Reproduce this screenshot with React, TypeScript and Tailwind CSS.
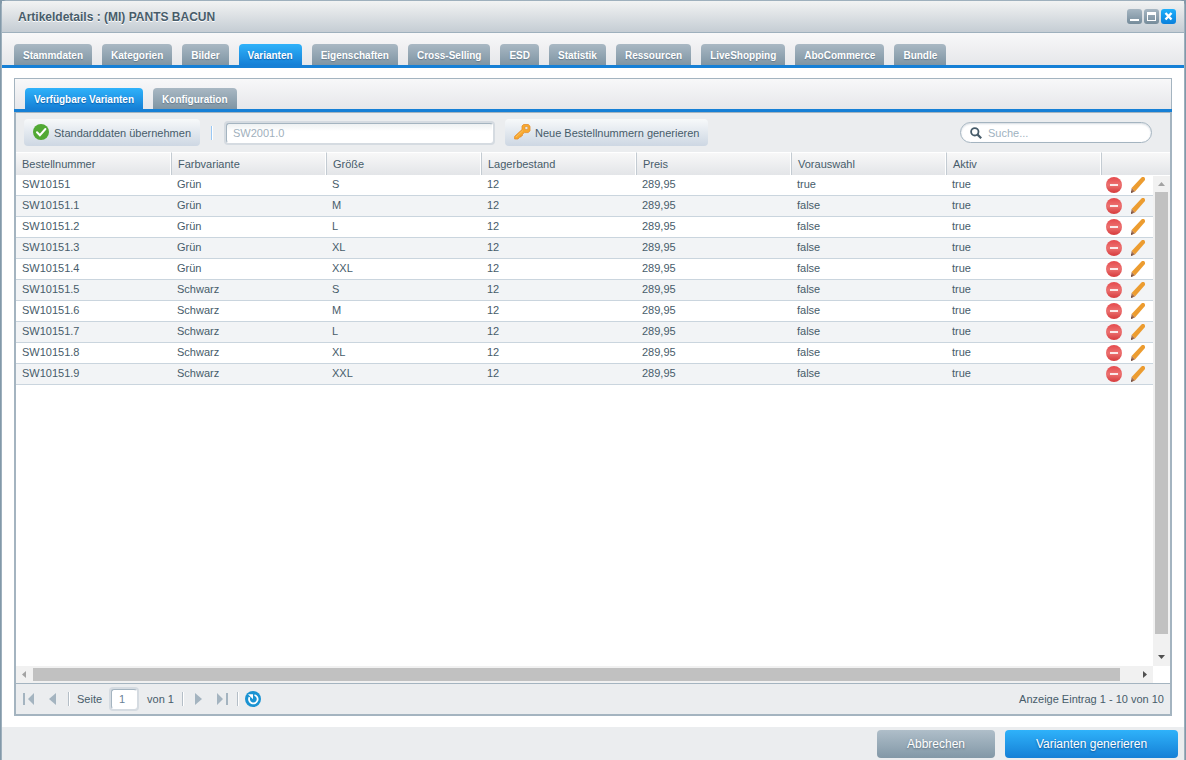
import type {ReactNode} from 'react'

const tabs = [
  'Stammdaten',
  'Kategorien',
  'Bilder',
  'Varianten',
  'Eigenschaften',
  'Cross-Selling',
  'ESD',
  'Statistik',
  'Ressourcen',
  'LiveShopping',
  'AboCommerce',
  'Bundle',
]

const columns = ['Bestellnummer', 'Farbvariante', 'Größe', 'Lagerbestand', 'Preis', 'Vorauswahl', 'Aktiv']

const sizes = ['S', 'M', 'L', 'XL', 'XXL']

const variants = ['Grün', 'Schwarz'].flatMap((color, c) =>
  sizes.map((size, s) => {
    const index = c * sizes.length + s
    return {
      number: index === 0 ? 'SW10151' : `SW10151.${index}`,
      color,
      size,
      stock: '12',
      price: '289,95',
      preselected: index === 0 ? 'true' : 'false',
      active: 'true',
    }
  }),
)

function Tab({label, active}: {label: string; active?: boolean}) {
  return (
    <button
      type="button"
      role="tab"
      aria-selected={!!active}
      className={`h-[21px] whitespace-nowrap rounded-t px-[9px] text-[10px] font-bold leading-[23px] text-white ${
        active
          ? 'bg-linear-to-b from-[#2fb2fa] to-[#1680d6] [text-shadow:0_1px_1px_#0a5fae]'
          : 'bg-linear-to-b from-[#a9b8c3] to-[#7f95a4] [text-shadow:0_1px_1px_#64798a]'
      }`}
    >
      {label}
    </button>
  )
}

function ToolButton({icon, children}: {icon: ReactNode; children: ReactNode}) {
  return (
    <button
      type="button"
      className="flex h-[27px] items-center gap-1 whitespace-nowrap rounded bg-linear-to-b from-[#f7f9fa] to-[#cdd7e3] px-[9px]"
    >
      {icon}
      <span className="pt-px">{children}</span>
    </button>
  )
}

function Separator() {
  return <span className="h-[14px] w-[2px] border-l border-[#b4bec7] bg-white" />
}

function CheckIcon() {
  return (
    <svg width="17" height="17" viewBox="0 0 17 17" aria-hidden="true">
      <circle cx="8" cy="8" r="8" fill="#51a934" />
      <path d="M4 8.2l2.900 3L12.400 5" fill="none" stroke="#fff" strokeWidth="2" strokeLinecap="round" />
    </svg>
  )
}

function KeyIcon() {
  return (
    <svg width="17" height="17" viewBox="0 0 17 17" aria-hidden="true">
      <path
        d="M9.500.5h4.800l1.700 1.700v4.600l-1.700 1.800h-4L8.500 10.300v1.200H7.200v1.400H5.800L4 15H.6v-2.600L8 5.600V2z"
        fill="#f8a92f"
        stroke="#e58d2c"
        strokeWidth=".8"
      />
      <path d="M11 2.600h2.800v2.800H11z" fill="#ebedef" stroke="#d98a33" strokeWidth=".6" />
      <path d="M2 13l7-6.500" stroke="#fbbf5c" />
    </svg>
  )
}

function DeleteIcon() {
  return (
    <svg width="16" height="16" viewBox="0 0 16 16" aria-hidden="true">
      <defs>
        <linearGradient id="delete-fill" x1="0" y1="0" x2="0" y2="1">
          <stop offset="0" stopColor="#e5494c" />
          <stop offset=".5" stopColor="#ec7271" />
          <stop offset="1" stopColor="#d63a3c" />
        </linearGradient>
      </defs>
      <circle cx="8" cy="8" r="8" fill="url(#delete-fill)" />
      <path d="M4 8h8" stroke="#fbe9e9" strokeWidth="2" />
    </svg>
  )
}

function PencilIcon() {
  return (
    <svg width="16" height="16" viewBox="0 0 16 16" aria-hidden="true">
      <path d="M1.600 11L11 .9 12 0h2l1 1.200v1.800L5 14.400z" fill="#ec9c30" />
      <path d="M1.600 11L5 14.400 1 16z" fill="#a9704e" />
      <path d="M1.200 13.400L3.200 15.100 1 16z" fill="#6e5148" />
    </svg>
  )
}

function TitleBar() {
  return (
    <header className="flex h-8 items-center justify-between border-b border-[#9eb0bd] bg-linear-to-b from-[#f2f3f3] to-[#c5cdd4] pl-4 pr-2">
      <h1 className="text-xs font-bold text-[#475c6a] [text-shadow:0_1px_0_#fff]">
        Artikeldetails : (MI) PANTS BACUN
      </h1>
      <div className="flex gap-[2px]">
        <button
          type="button"
          aria-label="Minimieren"
          className="size-[15px] rounded-[3px] bg-linear-to-b from-[#a6b6c2] to-[#768c9b]"
        >
          <svg width="15" height="15" viewBox="0 0 15 15" aria-hidden="true">
            <path d="M3 11h9" stroke="#fff" strokeWidth="2" />
          </svg>
        </button>
        <button
          type="button"
          aria-label="Maximieren"
          className="size-[15px] rounded-[3px] bg-linear-to-b from-[#a6b6c2] to-[#768c9b]"
        >
          <svg width="15" height="15" viewBox="0 0 15 15" aria-hidden="true">
            <path d="M3 3h9v9H3zM4 6v5h7V6z" fill="#fff" fillRule="evenodd" />
          </svg>
        </button>
        <button
          type="button"
          aria-label="Schließen"
          className="size-[15px] rounded-[3px] bg-linear-to-b from-[#1fb0fb] to-[#0a80dc]"
        >
          <svg width="15" height="15" viewBox="0 0 15 15" aria-hidden="true">
            <path d="M4.500 4l6 6.500m0-6.500l-6 6.500" stroke="#fff" strokeWidth="2.400" />
          </svg>
        </button>
      </div>
    </header>
  )
}

function Toolbar() {
  return (
    <div className="flex h-10 items-center border-t border-[#a4b4c0] pl-2 pr-[18px]">
      <ToolButton icon={<CheckIcon />}>Standarddaten übernehmen</ToolButton>
      <span className="ml-[11px] h-[14px] w-[2px] border-l border-[#99c8f5] bg-white" />
      <div className="ml-[11px] rounded bg-[#d5dbe1] p-[2px]">
        <input
          type="text"
          aria-label="Bestellnummer Vorlage"
          defaultValue="SW2001.0"
          className="block h-5 w-[267px] rounded-[3px] border border-[#a4b4c0] border-b-white border-r-white bg-white bg-linear-to-b from-[#eef1f2] to-white to-40% px-[6px] text-[#9fb0bc]"
        />
      </div>
      <div className="ml-[10px]">
        <ToolButton icon={<KeyIcon />}>Neue Bestellnummern generieren</ToolButton>
      </div>
      <label className="ml-auto flex h-[21px] w-48 items-center gap-[6px] rounded-full border border-[#a4b4c0] bg-white px-[9px] shadow-[inset_0_1px_2px_#d5dbe1]">
        <svg width="12" height="12" viewBox="0 0 12 12" aria-hidden="true" className="shrink-0">
          <circle cx="4.800" cy="4.800" r="3.700" fill="none" stroke="#475c6a" strokeWidth="1.800" />
          <path d="M7.600 7.600l3.600 3.600" stroke="#475c6a" strokeWidth="2.200" />
        </svg>
        <input
          type="search"
          aria-label="Suche"
          placeholder="Suche..."
          className="min-w-0 flex-1 bg-transparent pt-px outline-none placeholder:text-[#a0b2c0]"
        />
      </label>
    </div>
  )
}

function VerticalScrollbar() {
  return (
    <div className="absolute bottom-[17px] right-0 top-6 flex w-[17px] flex-col items-center bg-[#f1f1f1]">
      <svg width="17" height="16" viewBox="0 0 17 16" aria-hidden="true">
        <path d="M5 10h7L8.500 6z" fill="#a3a3a3" />
      </svg>
      <div className="w-[13px] flex-1 bg-[#c1c1c1]" />
      <svg width="17" height="32" viewBox="0 0 17 32" aria-hidden="true">
        <path d="M5 21h7l-3.500 4z" fill="#505050" />
      </svg>
    </div>
  )
}

function HorizontalScrollbar() {
  return (
    <div className="mr-[17px] flex h-[17px] items-center bg-[#f1f1f1]">
      <svg width="17" height="17" viewBox="0 0 17 17" aria-hidden="true">
        <path d="M10 5v7L6 8.500z" fill="#a3a3a3" />
      </svg>
      <div className="h-[13px] flex-1 bg-[#c1c1c1]" />
      <svg width="33" height="17" viewBox="0 0 33 17" aria-hidden="true">
        <path d="M23 5v7l4-3.500z" fill="#505050" />
      </svg>
    </div>
  )
}

function VariantGrid() {
  return (
    <div className="relative flex flex-1 flex-col justify-between bg-white">
      <table className="w-full table-fixed border-separate border-spacing-0 text-left">
        <thead>
          <tr className="h-[23px] bg-linear-to-b from-[#f9f9f9] to-[#e3e5e8]">
            {columns.map(column => (
              <th
                key={column}
                scope="col"
                className="border-l border-t border-l-[#c3cbd2] border-t-white px-[6px] font-normal shadow-[inset_-1px_0_0_#fff] first:border-l-0"
              >
                {column}
              </th>
            ))}
            <td className="w-[69px] border-l border-t border-l-[#c3cbd2] border-t-white" />
          </tr>
        </thead>
        <tbody>
          {variants.map(variant => (
            <tr
              key={variant.number}
              className="h-[21px] even:bg-[#f2f4f6] *:border-b *:border-[#cad5de] *:pb-[2px] *:pl-[6px] *:last:pl-[5px]"
            >
              <td>{variant.number}</td>
              <td>{variant.color}</td>
              <td>{variant.size}</td>
              <td>{variant.stock}</td>
              <td>{variant.price}</td>
              <td>{variant.preselected}</td>
              <td>{variant.active}</td>
              <td>
                <div className="-mb-[2px] flex gap-2">
                  <button type="button" aria-label="Löschen">
                    <DeleteIcon />
                  </button>
                  <button type="button" aria-label="Bearbeiten">
                    <PencilIcon />
                  </button>
                </div>
              </td>
            </tr>
          ))}
        </tbody>
      </table>
      <VerticalScrollbar />
      <HorizontalScrollbar />
    </div>
  )
}

function Paging() {
  return (
    <div className="flex h-[31px] items-center border-t border-[#a4b4c0] pl-[7px] pr-[6px]">
      <button type="button" aria-label="Erste Seite">
        <svg width="12" height="12" viewBox="0 0 12 12" aria-hidden="true">
          <path d="M0 0h2v12H0zM11 0v12L5 6z" fill="#a4b4c0" />
        </svg>
      </button>
      <button type="button" aria-label="Vorherige Seite" className="ml-[14px]">
        <svg width="7" height="12" viewBox="0 0 7 12" aria-hidden="true">
          <path d="M7 0v12L0 6z" fill="#a4b4c0" />
        </svg>
      </button>
      <span className="ml-3 flex">
        <Separator />
      </span>
      <label htmlFor="page" className="ml-[7px]">
        Seite
      </label>
      <div className="ml-[7px] rounded bg-[#d5dbe1] p-[2px]">
        <input
          id="page"
          type="text"
          defaultValue="1"
          className="block h-5 w-[26px] rounded-[3px] border border-[#a4b4c0] border-b-white border-r-white bg-white px-[7px] text-[#6a8296]"
        />
      </div>
      <span className="ml-2">von 1</span>
      <span className="ml-2 flex">
        <Separator />
      </span>
      <button type="button" aria-label="Nächste Seite" className="ml-[11px]">
        <svg width="7" height="12" viewBox="0 0 7 12" aria-hidden="true">
          <path d="M0 0v12l7-6z" fill="#a4b4c0" />
        </svg>
      </button>
      <button type="button" aria-label="Letzte Seite" className="ml-[14px]">
        <svg width="12" height="12" viewBox="0 0 12 12" aria-hidden="true">
          <path d="M10 0h2v12h-2zM1 0v12l6-6z" fill="#a4b4c0" />
        </svg>
      </button>
      <span className="ml-[9px] flex">
        <Separator />
      </span>
      <button type="button" aria-label="Aktualisieren" className="ml-[6px]">
        <svg width="16" height="16" viewBox="0 0 16 16" aria-hidden="true">
          <circle cx="8" cy="8" r="8" fill="#1a93d2" />
          <path d="M9.500 4a4.300 4.300 0 1 1-5 2.200" fill="none" stroke="#fff" strokeWidth="1.800" />
          <path d="M3 3.200h5v5z" fill="#fff" />
        </svg>
      </button>
      <span className="ml-auto">Anzeige Eintrag 1 - 10 von 10</span>
    </div>
  )
}

export default function App() {
  return (
    <div className="flex min-h-screen flex-col bg-[#8299a9] px-px font-['Liberation_Sans',Arial,sans-serif] text-[11px] leading-[14px] text-[#475c6a]">
      <div className="flex flex-1 flex-col rounded-t-md border border-b-0 border-[#9eb0bd] bg-[#ebedef]">
        <TitleBar />
        <nav
          role="tablist"
          aria-label="Artikel"
          className="flex gap-[10px] border-b-[3px] border-[#1680d6] bg-linear-to-b from-[#f8f8f9] to-[#e6e7ea] px-3 pt-[11px]"
        >
          {tabs.map(tab => (
            <Tab key={tab} label={tab} active={tab === 'Varianten'} />
          ))}
        </nav>
        <main className="flex flex-1 flex-col bg-white px-3 pb-[11px] pt-[10px]">
          <div
            role="tablist"
            aria-label="Varianten"
            className="flex gap-[10px] border-x border-t border-[#a4b4c0] bg-linear-to-b from-[#f8f8f9] to-[#e6e7ea] px-[10px] pt-[9px]"
          >
            <Tab label="Verfügbare Varianten" active />
            <Tab label="Konfiguration" />
          </div>
          <div className="h-[3px] bg-[#1680d6]" />
          <section className="flex flex-1 flex-col border-x-2 border-b-2 border-[#a4b4c0] bg-[#ebedef]">
            <Toolbar />
            <VariantGrid />
            <Paging />
          </section>
        </main>
        <footer className="flex justify-end gap-[10px] px-[6px] pb-[2px] pt-[3px] text-xs text-white">
          <button
            type="button"
            className="h-7 w-[118px] rounded bg-linear-to-b from-[#afbec9] to-[#8298a7] [text-shadow:0_1px_2px_#566b7a]"
          >
            Abbrechen
          </button>
          <button
            type="button"
            className="h-7 w-[173px] rounded bg-linear-to-b from-[#2fb2fa] to-[#1680d6] [text-shadow:0_1px_2px_#0a4f94]"
          >
            Varianten generieren
          </button>
        </footer>
      </div>
    </div>
  )
}
